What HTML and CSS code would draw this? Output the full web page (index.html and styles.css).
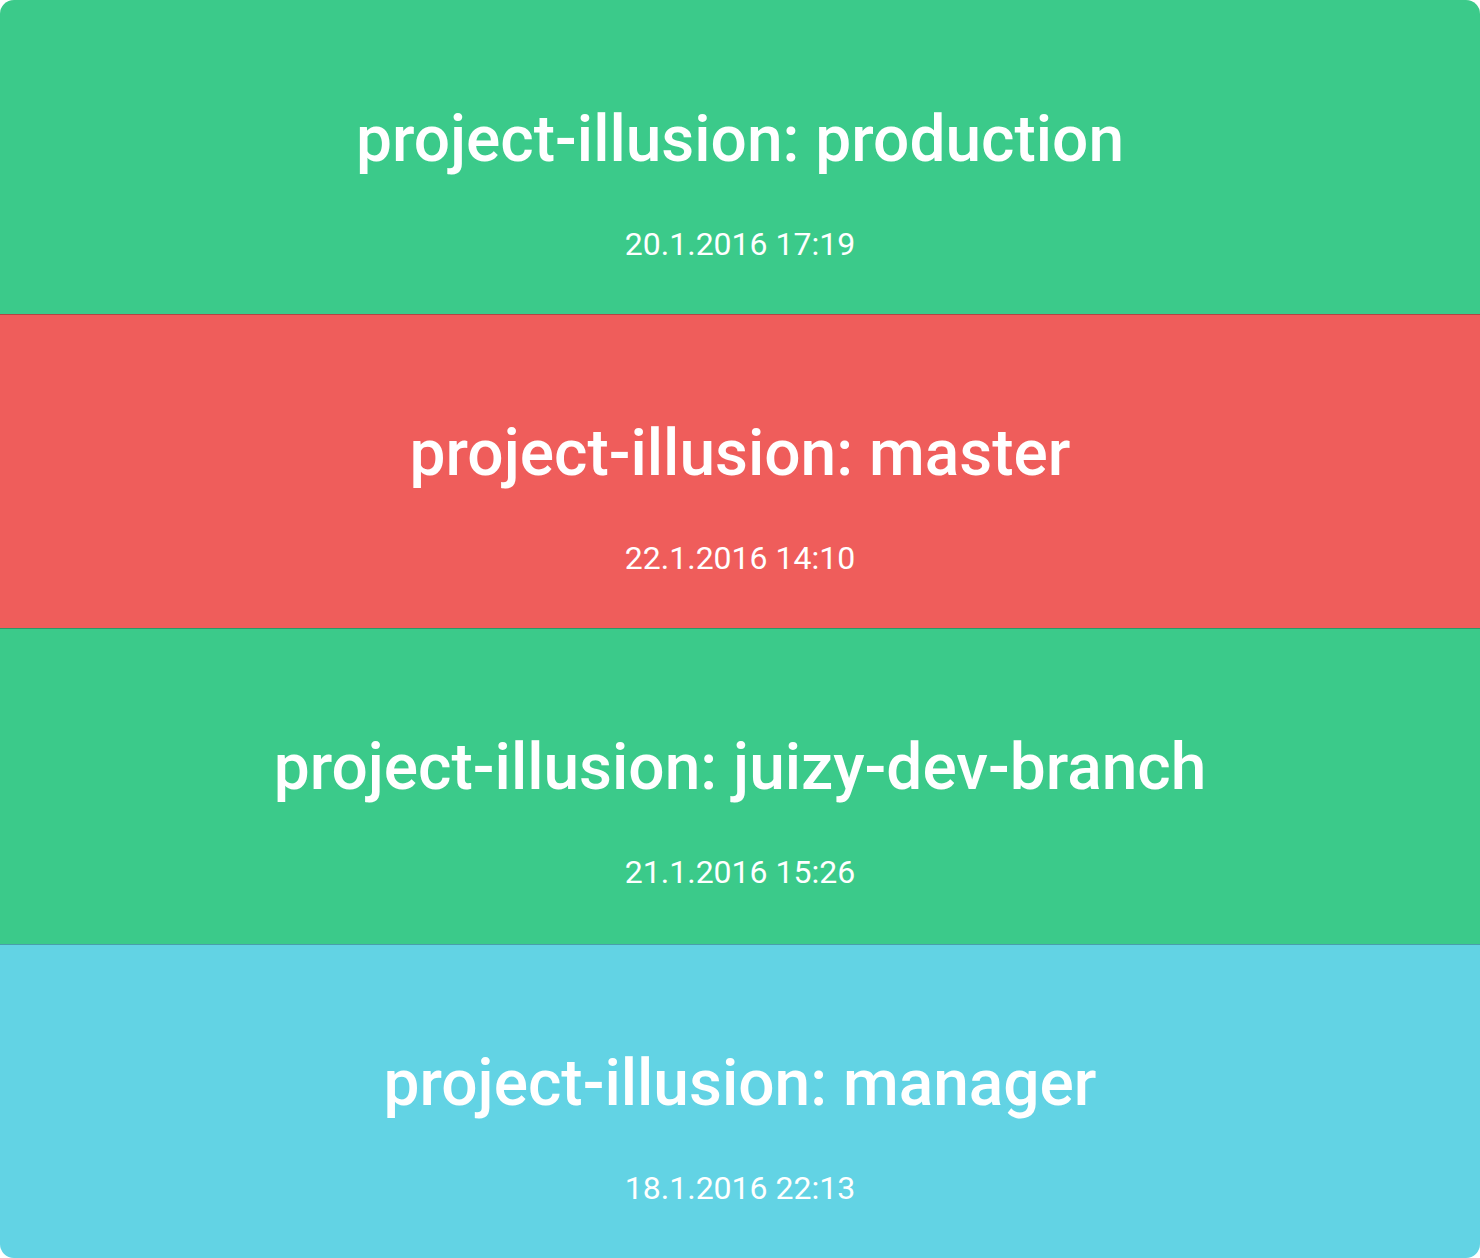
FILE: index.html
```html
<!DOCTYPE html>
<html>
<head>
<meta charset="utf-8">
<link rel="stylesheet" href="styles.css">
</head>
<body>
<div class="board">
  <div class="build build-ok">
    <div class="title">project-illusion: production</div>
    <div class="date">20.1.2016 17:19</div>
  </div>
  <div class="build build-fail">
    <div class="title">project-illusion: master</div>
    <div class="date">22.1.2016 14:10</div>
  </div>
  <div class="build build-ok">
    <div class="title">project-illusion: juizy-dev-branch</div>
    <div class="date">21.1.2016 15:26</div>
  </div>
  <div class="build build-info">
    <div class="title">project-illusion: manager</div>
    <div class="date">18.1.2016 22:13</div>
  </div>
</div>
</body>
</html>
```
FILE: styles.css
```css
html, body {
  margin: 0;
  padding: 0;
  background: #ffffff;
}
body {
  font-family: Roboto, "Liberation Sans", sans-serif;
  color: #ffffff;
}
.board {
  width: 1480px;
  height: 1258px;
  border-radius: 14px;
  overflow: hidden;
  display: grid;
  grid-template-rows: 314px 314px 316px 314px;
}
.build {
  display: flex;
  flex-direction: column;
  align-items: center;
  justify-content: flex-start;
  box-sizing: border-box;
  padding-top: 107px;
  border-top: 1px solid rgba(0, 0, 0, 0.25);
}
.build:first-child {
  border-top: none;
  padding-top: 108px;
}
.build-ok { background: #3bca8a; }
.build-fail { background: #ef5d5b; }
.build-info { background: #62d3e4; }
.title {
  font-size: 64px;
  font-weight: 500;
  line-height: 1;
}
.date {
  font-size: 32px;
  font-weight: 400;
  line-height: 1;
  margin-top: 56px;
}
```
